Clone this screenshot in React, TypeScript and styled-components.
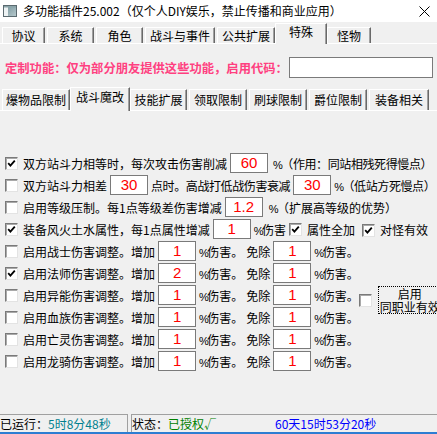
import React from 'react'
import styled, { createGlobalStyle } from 'styled-components'

const GlobalStyle = createGlobalStyle`
  html, body {
    margin: 0;
    padding: 0;
    background: #f0f0f0;
  }
`

const Win = styled.div`
  width: 437px;
  height: 434px;
  overflow: hidden;
  display: flex;
  flex-direction: column;
  background: #f0f0f0;
  color: #000;
  font: 12px 'Noto Sans CJK SC', sans-serif;
`

const TitleBar = styled.div`
  height: 22px;
  flex: none;
  display: flex;
  align-items: center;
  padding: 0 7px 0 3px;
  background: #fff;
`

const Title = styled.div`
  flex: 1;
  margin-left: 6px;
  white-space: nowrap;
  line-height: 22px;
`

const TabStrip = styled.div<{ $h: number; $mt?: number }>`
  flex: none;
  display: flex;
  align-items: flex-end;
  gap: 2px;
  height: ${(p) => p.$h}px;
  margin-top: ${(p) => p.$mt ?? 0}px;
  padding-left: 2px;
  border-bottom: 1px solid #fff;
`

const Tab = styled.div<{ $w: number; $h: number; $on?: boolean; $lh: number }>`
  box-sizing: border-box;
  flex: none;
  width: ${(p) => (p.$on ? p.$w + 4 : p.$w)}px;
  height: ${(p) => p.$h}px;
  margin: ${(p) => (p.$on ? '0 -2px -1px' : '0')};
  position: relative;
  z-index: ${(p) => (p.$on ? 1 : 0)};
  background: #f0f0f0;
  border-top: 1px solid #fff;
  border-left: 1px solid #fff;
  border-right: 1px solid #696969;
  box-shadow: inset -1px 0 0 #a0a0a0;
  text-align: center;
  line-height: ${(p) => p.$lh}px;
  white-space: nowrap;
`

const CodeRow = styled.div`
  flex: none;
  display: flex;
  align-items: center;
  height: 21px;
  margin-top: 13px;
  padding: 0 4px 0 5px;
`

const CodeLabel = styled.span`
  flex: none;
  color: #ff4080;
  font-weight: bold;
  font-size: 12.3px;
  white-space: nowrap;
`

const CodeInput = styled.div`
  flex: none;
  margin-left: auto;
  box-sizing: border-box;
  width: 144px;
  height: 21px;
  background: #fff;
  border: 1px solid #7a7a7a;
`

const Body = styled.div`
  flex: none;
  margin-top: 41px;
  display: flex;
  flex-direction: column;
`

const Row = styled.div`
  display: flex;
  align-items: center;
  gap: 3px;
  height: 22px;
  padding-left: 5px;
  white-space: nowrap;
`

const Check = styled.span`
  box-sizing: border-box;
  flex: none;
  display: inline-flex;
  align-items: center;
  justify-content: center;
  width: 13px;
  height: 13px;
  margin-right: 2px;
  background: #fff;
  border: 1px solid;
  border-color: #7a7a7a #e3e3e3 #e3e3e3 #7a7a7a;
  box-shadow: inset 1px 1px 0 #a9a9a9;
`

const Num = styled.span`
  box-sizing: border-box;
  flex: none;
  width: 38px;
  height: 20px;
  background: #fff;
  border: 1px solid #7a7a7a;
  color: #ff0000;
  font: 15px 'Liberation Sans', sans-serif;
  line-height: 18px;
  text-align: center;
`

const Txt = styled.span<{ $ml?: number; $tight?: boolean }>`
  margin-left: ${(p) => p.$ml ?? 0}px;
  letter-spacing: ${(p) => (p.$tight ? '-0.4px' : '0')};
`

const Pct = styled.span`
  font: 11px 'Liberation Sans', sans-serif;
  letter-spacing: -2.5px;
  margin-right: 1px;
`

const JobBlock = styled.div`
  display: flex;
  align-items: center;
`

const Side = styled.div`
  display: flex;
  align-items: center;
  gap: 4px;
  margin: 0 0 12px 0;
`

const SideLabel = styled.div`
  box-sizing: border-box;
  flex: none;
  width: 64px;
  height: 28px;
  border: 1px dotted #000;
  text-align: center;
  line-height: 13px;
  white-space: nowrap;
`

const StatusBar = styled.div`
  box-sizing: border-box;
  flex: none;
  margin-top: auto;
  height: 20px;
  display: flex;
  border-bottom: 2px solid #2d7dd2;
`

const Pane = styled.div<{ $w?: number; $first?: boolean }>`
  ${(p) => (p.$w ? `width: ${p.$w}px; flex: none;` : 'flex: 1;')}
  border-top: 1px solid #a0a0a0;
  ${(p) => (p.$first ? 'border-right: 1px solid #a0a0a0;' : 'border-left: 1px solid #a0a0a0; margin-left: 3px;')}
  line-height: 17px;
  white-space: nowrap;
  display: flex;
`

const Color = styled.span<{ $c: string; $w?: number }>`
  color: ${(p) => p.$c};
  ${(p) => (p.$w ? `display: inline-block; width: ${p.$w}px;` : '')}
`

const tabs1: [string, number][] = [
  ['协议', 43],
  ['系统', 47],
  ['角色', 47],
  ['战斗与事件', 70],
  ['公共扩展', 58],
  ['特殊', 48],
  ['怪物', 44],
]

const tabs2: [string, number][] = [
  ['爆物品限制', 68],
  ['战斗魔改', 56],
  ['技能扩展', 57],
  ['领取限制', 58],
  ['刷球限制', 58],
  ['爵位限制', 58],
  ['装备相关', 60],
]

const jobs = [
  { name: '战士', on: false, add: '1', cut: '1' },
  { name: '法师', on: true, add: '2', cut: '1' },
  { name: '异能', on: false, add: '1', cut: '1' },
  { name: '血族', on: false, add: '1', cut: '1' },
  { name: '亡灵', on: false, add: '1', cut: '1' },
  { name: '龙骑', on: false, add: '1', cut: '1' },
]

function Box({ on }: { on?: boolean }) {
  return (
    <Check>
      {on && (
        <svg width='9' height='9' viewBox='0 0 9 9'>
          <path d='M1.2 4.2 L3.4 6.6 L7.8 1.6' fill='none' stroke='#000' strokeWidth='1.8' />
        </svg>
      )}
    </Check>
  )
}

function AppIcon() {
  return (
    <svg width='14' height='12' viewBox='0 0 14 12'>
      <defs>
        <linearGradient id='ig' x1='0' x2='1' y1='0' y2='1'>
          <stop offset='0' stopColor='#6f8f96' />
          <stop offset='1' stopColor='#b9cbcf' />
        </linearGradient>
      </defs>
      <rect x='0.5' y='0.5' width='13' height='11' fill='url(#ig)' stroke='#5b6a70' />
      <rect x='1' y='1' width='4' height='10' fill='#eef3f4' />
      <rect x='1' y='1' width='12' height='1.5' fill='#8aa3a8' />
    </svg>
  )
}

function CloseIcon() {
  return (
    <svg width='11' height='11' viewBox='0 0 11 11'>
      <path d='M0.5 0.5 L10.5 10.5 M10.5 0.5 L0.5 10.5' stroke='#000' strokeWidth='1' />
    </svg>
  )
}

export default function App() {
  return (
    <Win>
      <GlobalStyle />
      <TitleBar>
        <AppIcon />
        <Title>多功能插件25.002（仅个人DIY娱乐，禁止传播和商业应用）</Title>
        <CloseIcon />
      </TitleBar>

      <TabStrip $h={21}>
        {tabs1.map(([t, w]) => (
          <Tab key={t} $w={w} $on={t === '特殊'} $h={t === '特殊' ? 21 : 16} $lh={t === '特殊' ? 16 : 15}>
            {t}
          </Tab>
        ))}
      </TabStrip>

      <CodeRow>
        <CodeLabel>定制功能：仅为部分朋友提供这些功能，启用代码：</CodeLabel>
        <CodeInput />
      </CodeRow>

      <TabStrip $h={23} $mt={9}>
        {tabs2.map(([t, w]) => (
          <Tab key={t} $w={w} $on={t === '战斗魔改'} $h={t === '战斗魔改' ? 24 : 21} $lh={t === '战斗魔改' ? 17 : 20}>
            {t}
          </Tab>
        ))}
      </TabStrip>

      <Body>
        <Row>
          <Box on />
          <Txt>双方站斗力相等时，每次攻击伤害削减</Txt>
          <Num>60</Num>
          <Txt $ml={2} $tight>
            <Pct>%</Pct>（作用：同站相残死得慢点）
          </Txt>
        </Row>
        <Row>
          <Box />
          <Txt>双方站斗力相差</Txt>
          <Num>30</Num>
          <Txt $tight>点时。高战打低战伤害衰减</Txt>
          <Num>30</Num>
          <Txt $tight>
            <Pct>%</Pct>（低站方死慢点）
          </Txt>
        </Row>
        <Row>
          <Box />
          <Txt>启用等级压制。每1点等级差伤害增减</Txt>
          <Num>1.2</Num>
          <Txt $ml={3}>
            <Pct>%</Pct>（扩展高等级的优势）
          </Txt>
        </Row>
        <Row>
          <Box on />
          <Txt>装备风火土水属性，每1点属性增减</Txt>
          <Num>1</Num>
          <Txt>
            <Pct>%</Pct>伤害
          </Txt>
          <Box on />
          <Txt>属性全加</Txt>
          <Txt $ml={4}>
            <Box on />
          </Txt>
          <Txt>对怪有效</Txt>
        </Row>
        <JobBlock>
          <div>
            {jobs.map((j) => (
              <Row key={j.name}>
                <Box on={j.on} />
                <Txt>启用{j.name}伤害调整。增加</Txt>
                <Num>{j.add}</Num>
                <Txt>
                  <Pct>%</Pct>伤害。
                </Txt>
                <Txt>免除</Txt>
                <Num>{j.cut}</Num>
                <Txt>
                  <Pct>%</Pct>伤害。
                </Txt>
              </Row>
            ))}
          </div>
          <Side>
            <Box />
            <SideLabel>
              启用
              <br />
              同职业有效
            </SideLabel>
          </Side>
        </JobBlock>
      </Body>

      <StatusBar>
        <Pane $w={127} $first>
          已运行：<Color $c='#00808f'>5时8分48秒</Color>
        </Pane>
        <Pane>
          <Color $c='#000' $w={143}>
            状态：<Color $c='#008000'>已授权√</Color>
          </Color>
          <Color $c='#0000ff'>60天15时53分20秒</Color>
        </Pane>
      </StatusBar>
    </Win>
  )
}
